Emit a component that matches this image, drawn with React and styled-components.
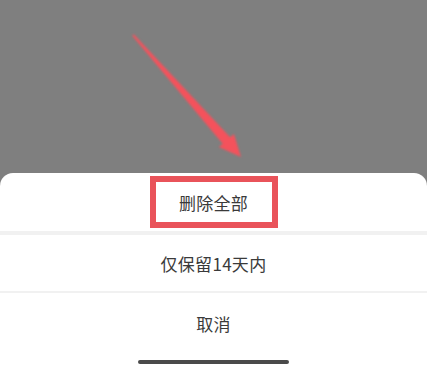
import React from "react";
import styled, { createGlobalStyle } from "styled-components";

const Global = createGlobalStyle`
  html, body { margin: 0; padding: 0; background: #7f7f7f; }
  body { font-family: "Noto Sans CJK SC", "Noto Sans", sans-serif; }
`;

const Screen = styled.div`
  width: 427px;
  height: 370px;
  display: flex;
  flex-direction: column;
  background: #7f7f7f;
  overflow: hidden;
`;

const Overlay = styled.div`
  position: relative;
  height: 173px;
  flex: none;
`;

const ArrowSvg = styled.svg`
  position: absolute;
  left: 0;
  top: 0;
  width: 427px;
  height: 173px;
  filter: blur(1.3px);
`;

const Sheet = styled.div`
  flex: 1;
  background: #fff;
  border-radius: 13px 13px 0 0;
  display: flex;
  flex-direction: column;
`;

const Row = styled.div`
  height: ${(p) => p.$h}px;
  display: flex;
  align-items: center;
  justify-content: center;
  font-size: 17px;
  color: #3a3a3a;
  letter-spacing: 0.3px;
`;

const Divider = styled.div`
  height: ${(p) => p.$h}px;
  background: #f1f1f1;
  flex: none;
`;

const Highlight = styled.div`
  width: 116px;
  height: 40px;
  border: 6px solid #e9535a;
  display: flex;
  align-items: center;
  justify-content: center;
`;

const HomeArea = styled.div`
  flex: 1;
  display: flex;
  justify-content: center;
  align-items: flex-start;
  padding-top: 7px;
`;

const HomeBar = styled.div`
  width: 151px;
  height: 4px;
  border-radius: 2px;
  background: #4a4a4a;
`;

export default function App() {
  return (
    <>
      <Global />
      <Screen>
        <Overlay>
          <ArrowSvg viewBox="0 0 427 173">
            <polygon
              points="133.7,34.3 230.1,137.2 233.9,133.9 241,157 218.9,147.1 222.7,143.8 132.3,35.7"
              fill="#f4525c"
            />
          </ArrowSvg>
        </Overlay>
        <Sheet>
          <Row $h={58}>
            <Highlight>删除全部</Highlight>
          </Row>
          <Divider $h={4} />
          <Row $h={56}>仅保留14天内</Row>
          <Divider $h={2} />
          <Row $h={60}>取消</Row>
          <HomeArea>
            <HomeBar />
          </HomeArea>
        </Sheet>
      </Screen>
    </>
  );
}
